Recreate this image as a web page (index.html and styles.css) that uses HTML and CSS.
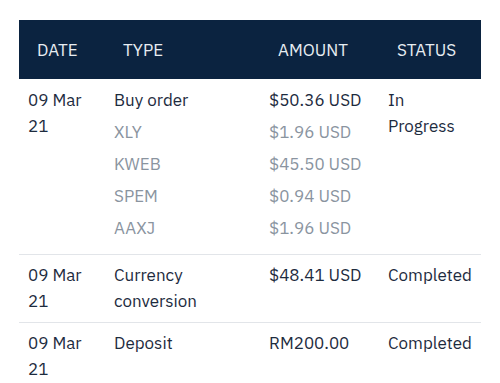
FILE: index.html
```html
<!DOCTYPE html>
<html>
<head>
    <title>Transactions</title>
    <link rel="stylesheet" href="styles.css">
</head>
<body>
    <div class="history">
        <div class="row head">
            <div class="cell">DATE</div>
            <div class="cell">TYPE</div>
            <div class="cell">AMOUNT</div>
            <div class="cell">STATUS</div>
        </div>
        <div class="row">
            <div class="cell">09 Mar 21</div>
            <div class="cell">
                Buy order
                <div class="sub">XLY</div>
                <div class="sub">KWEB</div>
                <div class="sub">SPEM</div>
                <div class="sub">AAXJ</div>
            </div>
            <div class="cell">
                $50.36 USD
                <div class="sub">$1.96 USD</div>
                <div class="sub">$45.50 USD</div>
                <div class="sub">$0.94 USD</div>
                <div class="sub">$1.96 USD</div>
            </div>
            <div class="cell">In Progress</div>
        </div>
        <div class="row">
            <div class="cell">09 Mar 21</div>
            <div class="cell">Currency conversion</div>
            <div class="cell">$48.41 USD</div>
            <div class="cell">Completed</div>
        </div>
        <div class="row">
            <div class="cell">09 Mar 21</div>
            <div class="cell">Deposit</div>
            <div class="cell">RM200.00</div>
            <div class="cell">Completed</div>
        </div>
    </div>
</body>
</html>
```

FILE: styles.css
```css
body {
    font-family: "IBM Plex Sans", Roboto, "Liberation Sans", sans-serif;
    background-color: #fff;
    margin: 0;
    padding: 20px 19px;
    color: #1d2b3e;
}
.history {
    width: 462px;
}
.row {
    display: grid;
    grid-template-columns: 86px 155px 119px 102px;
    border-bottom: 1px solid #e2e5e9;
    padding: 7px 0 8px;
}
.row:nth-child(2) {
    padding-top: 8px;
}
.row:last-child {
    border-bottom: none;
}
.row.head {
    background-color: #0b2340;
    color: #e8edf2;
    padding: 0;
    height: 59px;
    align-items: center;
    border-bottom: none;
}
.cell {
    font-size: 17px;
    line-height: 26px;
    padding: 0 9px;
}
.head .cell {
    padding-left: 18px;
}
.sub {
    color: #8a949f;
    margin-top: 6px;
}
.row .sub:last-child {
    margin-bottom: 5px;
}
```
